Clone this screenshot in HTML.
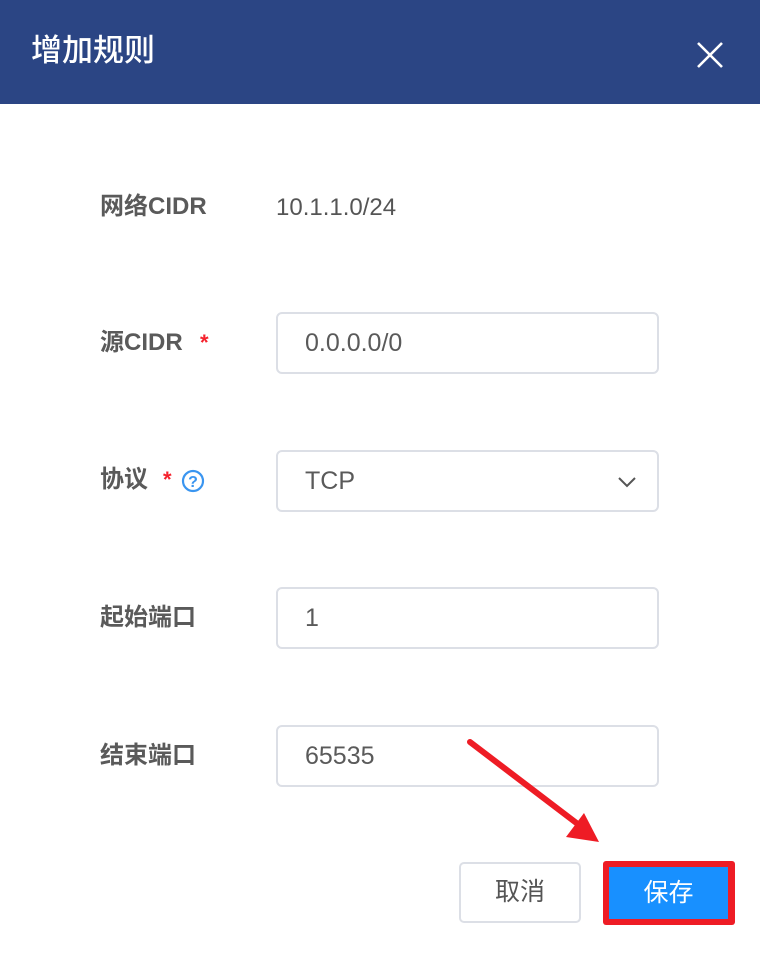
<!DOCTYPE html>
<html><head><meta charset="utf-8"><style>
*{margin:0;padding:0;box-sizing:border-box}
body{width:760px;height:954px;background:#fff;position:relative;overflow:hidden;font-family:"Liberation Sans","Noto Sans CJK SC",sans-serif}
.hdr{position:absolute;left:0;top:0;width:760px;height:104px;background:#2b4584}
.title{position:absolute;left:31px;top:30px;font-size:31px;font-weight:500;color:#fff;line-height:42px}
.lbl{position:absolute;left:100px;font-size:24px;font-weight:bold;color:#5a5a5a;line-height:30px}
.star{color:#f5222d;font-weight:bold;font-size:22px;position:absolute;top:2px}
.inp{position:absolute;left:276px;width:383px;height:62px;border:2px solid #dcdfe6;border-radius:6px;font-size:25px;color:#5a5a5a;padding-left:27px;line-height:58px}
.val{position:absolute;left:276px;font-size:24px;color:#555;line-height:30px}
.btn{position:absolute;font-size:25px;text-align:center;border-radius:5px}
</style></head><body>
<div class="hdr"><div class="title">增加规则</div>
<svg style="position:absolute;left:696px;top:42px" width="28" height="26" viewBox="0 0 28 26"><path d="M2 1L26 25M26 1L2 25" stroke="#fff" stroke-width="2.6"/></svg></div>

<div class="lbl" style="top:192px">网络CIDR</div>
<div class="val" style="top:193px">10.1.1.0/24</div>

<div class="lbl" style="top:328px">源CIDR</div><span class="star" style="left:200px;top:330px">*</span>
<div class="inp" style="top:312px">0.0.0.0/0</div>

<div class="lbl" style="top:465px">协议</div><span class="star" style="left:163px;top:467px">*</span>
<svg style="position:absolute;left:181px;top:469px" width="24" height="24" viewBox="0 0 24 24"><circle cx="12" cy="12" r="10" fill="none" stroke="#3a95f0" stroke-width="2.2"/><text x="12" y="18" font-size="16" font-weight="bold" text-anchor="middle" fill="#3a95f0" font-family="Liberation Sans">?</text></svg>
<div class="inp" style="top:450px">TCP
<svg style="position:absolute;right:20px;top:24px" width="20" height="12" viewBox="0 0 20 12"><path d="M2 2L10 10L18 2" fill="none" stroke="#555" stroke-width="2"/></svg></div>

<div class="lbl" style="top:603px">起始端口</div>
<div class="inp" style="top:587px">1</div>

<div class="lbl" style="top:741px">结束端口</div>
<div class="inp" style="top:725px">65535</div>

<svg style="position:absolute;left:0;top:0" width="760" height="954"><path d="M470 742L583 828" stroke="#ee1c25" stroke-width="6" stroke-linecap="round"/><path d="M566 837L599 842L584 813Z" fill="#ee1c25"/></svg>

<div class="btn" style="left:459px;top:862px;width:122px;height:61px;border:2px solid #dcdfe6;color:#555;line-height:57px">取消</div>
<div style="position:absolute;left:603px;top:861px;width:132px;height:64px;background:#ee1c25;border-radius:3px"></div>
<div class="btn" style="left:609px;top:867px;width:119px;height:52px;background:#1890ff;color:#fff;line-height:52px;border-radius:0">保存</div>
</body></html>
